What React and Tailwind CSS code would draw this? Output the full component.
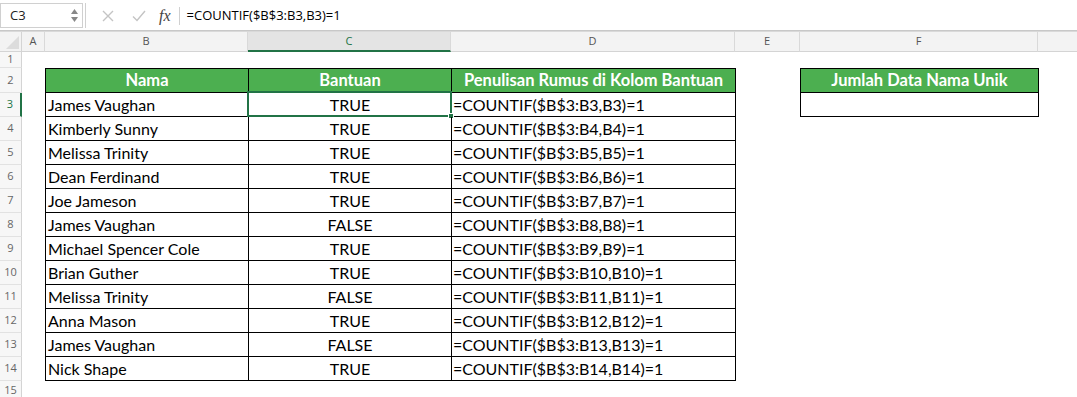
import React from "react";

const rows = [
  ["James Vaughan", "TRUE"],
  ["Kimberly Sunny", "TRUE"],
  ["Melissa Trinity", "TRUE"],
  ["Dean Ferdinand", "TRUE"],
  ["Joe Jameson", "TRUE"],
  ["James Vaughan", "FALSE"],
  ["Michael Spencer Cole", "TRUE"],
  ["Brian Guther", "TRUE"],
  ["Melissa Trinity", "FALSE"],
  ["Anna Mason", "TRUE"],
  ["James Vaughan", "FALSE"],
  ["Nick Shape", "TRUE"],
];

const cellFont = { fontFamily: "Lato, 'Open Sans', sans-serif" };

function RowHead({ n, selected, h }) {
  return (
    <div
      className={`w-[22px] shrink-0 flex items-center justify-center text-[11px] bg-[#f7f7f7] ${h} ${
        selected
          ? "text-[#217346] border-r-2 border-r-[#217346] bg-[#e6e6e6]"
          : "text-[#666] border-r border-r-[#d4d4d4]"
      } border-b border-b-[#e2e2e2]`}
      style={{ fontFamily: "'Open Sans', sans-serif" }}
    >
      {n}
    </div>
  );
}

function FormulaBar() {
  return (
    <div className="h-[31px] flex items-stretch bg-white border-b border-[#c8c8c8] pt-[3px] pb-[2px]">
      <div className="w-[83px] flex items-center border border-[#d0d0d0] bg-white">
        <span className="pl-[9px] text-[13px] text-[#222] flex-1" style={{ fontFamily: "'Open Sans', sans-serif" }}>
          C3
        </span>
        <div className="flex flex-col items-center gap-[3px] pr-[4px]">
          <svg width="7" height="5" viewBox="0 0 7 5"><path d="M3.5 0L7 5H0z" fill="#888" /></svg>
          <svg width="7" height="5" viewBox="0 0 7 5"><path d="M0 0h7L3.5 5z" fill="#888" /></svg>
        </div>
      </div>
      <div className="w-[3px] border-r border-[#d0d0d0]" />
      <div className="flex items-center pl-[16px]">
        <svg width="12" height="12" viewBox="0 0 12 12">
          <path d="M1 1L11 11M11 1L1 11" stroke="#c4c4c4" strokeWidth="1.4" />
        </svg>
        <svg className="ml-[18px]" width="14" height="12" viewBox="0 0 14 12">
          <path d="M1 6.5L5 10.5L13 1" stroke="#c4c4c4" strokeWidth="1.4" fill="none" />
        </svg>
        <span
          className="ml-[13px] text-[16px] italic text-[#444]"
          style={{ fontFamily: "'Liberation Serif', serif" }}
        >
          fx
        </span>
        <div className="ml-[8px] w-px h-[18px] bg-[#d0d0d0]" />
        <span className="ml-[7px] text-[13px] text-black" style={{ fontFamily: "'Open Sans', sans-serif" }}>
          =COUNTIF($B$3:B3,B3)=1
        </span>
      </div>
    </div>
  );
}

function ColHeaders() {
  const cols = [
    ["A", "w-[23px]"],
    ["B", "w-[203px]"],
    ["C", "w-[203px]"],
    ["D", "w-[284px]"],
    ["E", "w-[65px]"],
    ["F", "w-[238px]"],
  ];
  return (
    <div className="h-[21px] flex bg-[#f3f3f3] border-t border-[#d9d9d9]" style={{ fontFamily: "'Open Sans', sans-serif" }}>
      <div className="w-[22px] shrink-0 relative border-r border-[#d4d4d4] border-b border-b-[#d4d4d4]">
        <svg className="absolute right-[2px] bottom-[2px]" width="13" height="13" viewBox="0 0 13 13">
          <path d="M13 0V13H0z" fill="#dcdcdc" />
        </svg>
      </div>
      {cols.map(([k, w]) => (
        <div
          key={k}
          className={`${w} shrink-0 flex items-center justify-center text-[11px] border-r border-[#d9d9d9] ${
            k === "C"
              ? "text-[#217346] bg-[#e4e4e4] border-b-2 border-b-[#217346]"
              : "text-[#555] border-b border-b-[#d4d4d4]"
          }`}
        >
          {k}
        </div>
      ))}
      <div className="flex-1 border-b border-b-[#d4d4d4]" />
    </div>
  );
}

export default function App() {
  return (
    <div className="w-[1077px] h-[397px] overflow-hidden bg-white" style={cellFont}>
      <FormulaBar />
      <ColHeaders />
      {/* Row 1 */}
      <div className="flex h-[16px]">
        <RowHead n={1} h="h-[16px]" />
      </div>
      {/* Row 2 header */}
      <div className="flex h-[25px]">
        <RowHead n={2} h="h-[25px]" />
        <div className="w-[23px] shrink-0" />
        <div className="w-[204px] shrink-0 bg-[#4caf50] border border-black flex items-center justify-center text-white font-bold text-[16.5px]">
          Nama
        </div>
        <div className="w-[203px] shrink-0 bg-[#4caf50] border-y border-r border-black flex items-center justify-center text-white font-bold text-[16.5px]">
          Bantuan
        </div>
        <div className="w-[284px] shrink-0 bg-[#4caf50] border-y border-r border-black flex items-center justify-center text-white font-bold text-[16.5px] whitespace-nowrap">
          Penulisan Rumus di Kolom Bantuan
        </div>
        <div className="w-[64px] shrink-0" />
        <div className="w-[239px] shrink-0 bg-[#4caf50] border border-black flex items-center justify-center text-white font-bold text-[16.5px]">
          Jumlah Data Nama Unik
        </div>
      </div>
      {rows.map(([name, val], i) => {
        const r = i + 3;
        return (
          <div key={r} className="flex h-[24px]">
            <RowHead n={r} selected={r === 3} h="h-[24px]" />
            <div className="w-[23px] shrink-0" />
            <div className="w-[204px] shrink-0 border-x border-b border-black flex items-center pl-[2px] text-[16px] text-black whitespace-nowrap">
              {name}
            </div>
            <div className="w-[203px] shrink-0 border-r border-b border-black flex items-center justify-center text-[16px] text-black relative">
              {val}
              {r === 3 && (
                <div className="absolute left-[-2px] top-[-2px] right-[-1px] bottom-[-1px] border-2 border-[#217346]">
                  <div className="absolute right-[-4px] bottom-[-4px] w-[6px] h-[6px] bg-[#217346] border border-white" />
                </div>
              )}
            </div>
            <div className="w-[284px] shrink-0 border-r border-b border-black flex items-center pl-[1px] text-[16px] text-black whitespace-nowrap">
              =COUNTIF($B$3:B{r},B{r})=1
            </div>
            <div className="w-[64px] shrink-0" />
            {r === 3 && (
              <div className="w-[239px] shrink-0 border-x border-b border-black" />
            )}
          </div>
        );
      })}
      <div className="flex h-[20px]">
        <RowHead n={15} h="h-[20px]" />
      </div>
    </div>
  );
}
